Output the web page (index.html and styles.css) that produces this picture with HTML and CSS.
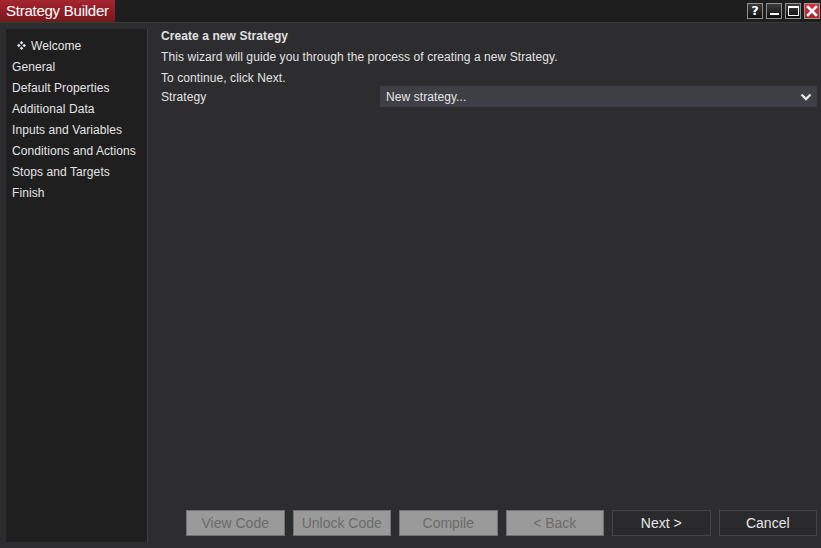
FILE: index.html
```html
<!DOCTYPE html>
<html>
<head>
<meta charset="utf-8">
<link rel="stylesheet" href="styles.css">
</head>
<body>
<div class="window">
  <div class="titlebar">
    <div class="title">Strategy Builder</div>
    <div class="wbtns">
      <div class="wbtn help">?</div>
      <div class="wbtn"><svg width="14" height="14" viewBox="0 0 14 14"><rect x="3" y="9" width="9" height="2" fill="#fff"/></svg></div>
      <div class="wbtn"><svg width="14" height="14" viewBox="0 0 14 14"><rect x="2.5" y="2.5" width="10" height="9" fill="none" stroke="#fff" stroke-width="1"/><rect x="2" y="2" width="11" height="2" fill="#fff"/></svg></div>
      <div class="wbtn close"><svg width="14" height="14" viewBox="0 0 14 14"><path d="M3 3 L11 11 M11 3 L3 11" stroke="#fff" stroke-width="2.6" stroke-linecap="square"/></svg></div>
    </div>
  </div>
  <div class="main">
    <div class="sidebar">
      <div class="item current"><svg class="ico" width="9" height="9" viewBox="0 0 8 8"><path d="M4 0 L5.6 1.6 L4 3.2 L2.4 1.6 Z M4 4.8 L5.6 6.4 L4 8 L2.4 6.4 Z M1.6 2.4 L3.2 4 L1.6 5.6 L0 4 Z M6.4 2.4 L8 4 L6.4 5.6 L4.8 4 Z" fill="#dfe6f0"/></svg>Welcome</div>
      <div class="item">General</div>
      <div class="item">Default Properties</div>
      <div class="item">Additional Data</div>
      <div class="item">Inputs and Variables</div>
      <div class="item">Conditions and Actions</div>
      <div class="item">Stops and Targets</div>
      <div class="item">Finish</div>
    </div>
    <div class="content">
      <div class="heading">Create a new Strategy</div>
      <div class="para">This wizard will guide you through the process of creating a new Strategy.</div>
      <div class="para">To continue, click Next.</div>
      <div class="field">
        <span class="label">Strategy</span>
        <div class="select">
          <span>New strategy...</span>
          <svg width="12" height="8" viewBox="0 0 12 8"><path d="M1.5 1.5 L6 6 L10.5 1.5" fill="none" stroke="#e8e8e8" stroke-width="2.4"/></svg>
        </div>
      </div>
      <div class="buttons">
        <div class="btn disabled">View Code</div>
        <div class="btn disabled">Unlock Code</div>
        <div class="btn disabled">Compile</div>
        <div class="btn disabled">&lt; Back</div>
        <div class="btn">Next &gt;</div>
        <div class="btn">Cancel</div>
      </div>
    </div>
  </div>
</div>
</body>
</html>
```

FILE: styles.css
```css
html, body {
  margin: 0;
  padding: 0;
  background: #2d2d30;
}
.window {
  width: 821px;
  height: 548px;
  display: flex;
  flex-direction: column;
  font-family: "Liberation Sans", Arial, sans-serif;
  font-size: 12px;
  letter-spacing: 0.08px;
  color: #e2e2e2;
  background: #2d2d30;
  overflow: hidden;
}
.titlebar {
  height: 22px;
  display: flex;
  justify-content: space-between;
  align-items: stretch;
  background: #1e1e1e;
  border-bottom: 1px solid #3a3a3c;
}
.title {
  width: 115px;
  box-sizing: border-box;
  padding-left: 6px;
  background: linear-gradient(#a42630, #7a161d);
  color: #ffffff;
  font-size: 15px;
  letter-spacing: -0.25px;
  line-height: 22px;
  white-space: nowrap;
  overflow: hidden;
}
.wbtns {
  display: flex;
  gap: 3px;
  padding: 3px 1px 0 0;
}
.wbtn {
  width: 14px;
  height: 14px;
  border: 1px solid #8e8e8e;
  background: linear-gradient(#3c3c3c, #0e0e0e);
  color: #fff;
  font-weight: bold;
  font-size: 13px;
  line-height: 14px;
  text-align: center;
  display: flex;
  align-items: center;
  justify-content: center;
}
.wbtn.help {
  font-family: "DejaVu Sans", sans-serif;
}
.wbtn.close {
  background: linear-gradient(#d8333a, #b01f26);
  border-color: #9a9a9a;
}
.main {
  flex: 1;
  display: flex;
  padding: 6px 4px 6px 6px;
}
.sidebar {
  width: 141px;
  background: #1f1f1f;
  border-right: 1px solid #3f3f46;
  padding-top: 6px;
}
.item {
  height: 21px;
  line-height: 21px;
  padding-left: 6px;
  white-space: nowrap;
  color: #e4e4e4;
}
.item.current {
  height: 22px;
  padding-left: 11px;
  display: flex;
  align-items: center;
}
.ico {
  margin-right: 5px;
  margin-top: -2px;
}
.content {
  flex: 1;
  display: flex;
  flex-direction: column;
  padding-left: 13px;
}
.heading {
  font-weight: bold;
  line-height: 15px;
  color: #e0e0e0;
}
.para {
  line-height: 15px;
  margin-top: 6px;
}
.field {
  display: grid;
  grid-template-columns: 219px 1fr;
  align-items: center;
}
.select {
  height: 21px;
  background: #3f3f46;
  display: flex;
  align-items: center;
  justify-content: space-between;
  padding: 0 5px 0 6px;
  color: #e6e6e6;
}
.buttons {
  margin-top: auto;
  margin-bottom: 6px;
  margin-left: 25px;
  display: flex;
  gap: 8px;
}
.btn {
  flex: 1;
  height: 24px;
  line-height: 24px;
  text-align: center;
  font-size: 14px;
  letter-spacing: 0;
  border: 1px solid #454549;
  background: #2a2a2d;
  color: #e6e6e6;
}
.btn.disabled {
  background: #9a9a9a;
  border-color: #727272;
  color: #6b6b6b;
}
```
